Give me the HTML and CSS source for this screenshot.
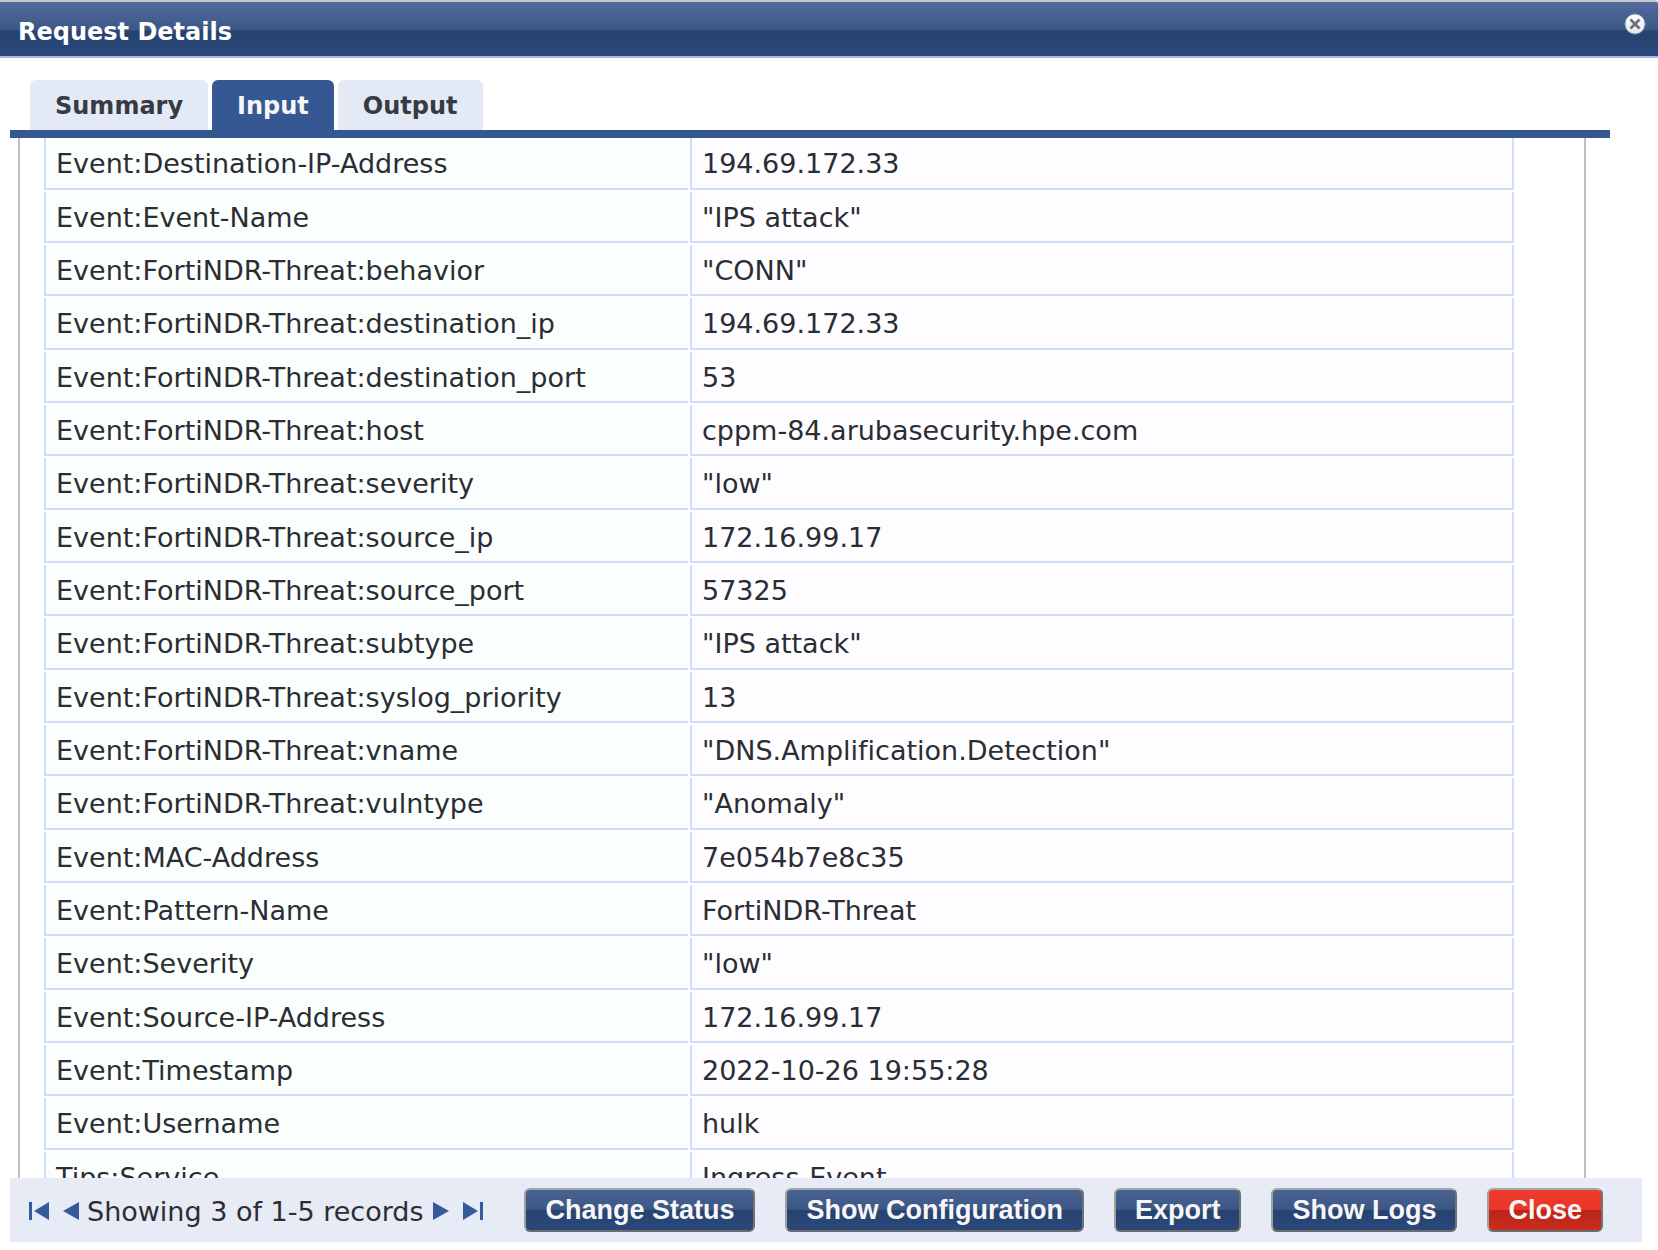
FILE: index.html
```html
<!DOCTYPE html>
<html lang="en">
<head>
<meta charset="utf-8">
<title>Request Details</title>
<link rel="stylesheet" href="styles.css">
</head>
<body>
<header class="titlebar">
  <h1 class="title">Request Details</h1>
  <button class="dismiss" type="button" aria-label="Close dialog">
    <svg width="22" height="22" viewBox="0 0 22 22">
      <defs><linearGradient id="knob" x1="0" y1="0" x2="0" y2="1"><stop offset="0" stop-color="#fff"/><stop offset="1" stop-color="#dfe7f3"/></linearGradient></defs>
      <circle cx="11" cy="11" r="10.2" fill="url(#knob)" stroke="#6f7a90" stroke-width="1"/>
      <path d="M6.5 6.5L15.5 15.5M15.5 6.5L6.5 15.5" stroke="#6c6f75" stroke-width="2.6"/>
    </svg>
  </button>
</header>
<nav class="tabs">
  <button class="tab" type="button">Summary</button>
  <button class="tab active" type="button">Input</button>
  <button class="tab" type="button">Output</button>
</nav>
<main class="viewport">
  <div class="panel">
    <table class="attributes">
      <tbody>
        <tr><th scope="row">Event:Destination-IP-Address</th><td>194.69.172.33</td></tr>
        <tr><th scope="row">Event:Event-Name</th><td>"IPS attack"</td></tr>
        <tr><th scope="row">Event:FortiNDR-Threat:behavior</th><td>"CONN"</td></tr>
        <tr><th scope="row">Event:FortiNDR-Threat:destination_ip</th><td>194.69.172.33</td></tr>
        <tr><th scope="row">Event:FortiNDR-Threat:destination_port</th><td>53</td></tr>
        <tr><th scope="row">Event:FortiNDR-Threat:host</th><td>cppm-84.arubasecurity.hpe.com</td></tr>
        <tr><th scope="row">Event:FortiNDR-Threat:severity</th><td>"low"</td></tr>
        <tr><th scope="row">Event:FortiNDR-Threat:source_ip</th><td>172.16.99.17</td></tr>
        <tr><th scope="row">Event:FortiNDR-Threat:source_port</th><td>57325</td></tr>
        <tr><th scope="row">Event:FortiNDR-Threat:subtype</th><td>"IPS attack"</td></tr>
        <tr><th scope="row">Event:FortiNDR-Threat:syslog_priority</th><td>13</td></tr>
        <tr><th scope="row">Event:FortiNDR-Threat:vname</th><td>"DNS.Amplification.Detection"</td></tr>
        <tr><th scope="row">Event:FortiNDR-Threat:vulntype</th><td>"Anomaly"</td></tr>
        <tr><th scope="row">Event:MAC-Address</th><td>7e054b7e8c35</td></tr>
        <tr><th scope="row">Event:Pattern-Name</th><td>FortiNDR-Threat</td></tr>
        <tr><th scope="row">Event:Severity</th><td>"low"</td></tr>
        <tr><th scope="row">Event:Source-IP-Address</th><td>172.16.99.17</td></tr>
        <tr><th scope="row">Event:Timestamp</th><td>2022-10-26 19:55:28</td></tr>
        <tr><th scope="row">Event:Username</th><td>hulk</td></tr>
        <tr><th scope="row">Tips:Service</th><td>Ingress-Event</td></tr>
      </tbody>
    </table>
  </div>
</main>
<footer class="footer">
  <div class="pager">
    <button class="page" type="button" aria-label="First record"><svg width="20" height="18" viewBox="0 0 20 18"><path d="M0 0H3V18H0ZM20 0V18L5 9Z"/></svg></button>
    <button class="page prev" type="button" aria-label="Previous record"><svg width="16" height="18" viewBox="0 0 16 18"><path d="M16 0V18L0 9Z"/></svg></button>
    <span class="count">Showing 3 of 1-5 records</span>
    <button class="page next" type="button" aria-label="Next record"><svg width="16" height="18" viewBox="0 0 16 18"><path d="M0 0V18L16 9Z"/></svg></button>
    <button class="page" type="button" aria-label="Last record"><svg width="20" height="18" viewBox="0 0 20 18"><path d="M17 0H20V18H17ZM0 0V18L15 9Z"/></svg></button>
  </div>
  <div class="actions">
    <button class="action" type="button">Change Status</button>
    <button class="action" type="button">Show Configuration</button>
    <button class="action" type="button">Export</button>
    <button class="action" type="button">Show Logs</button>
    <button class="action danger" type="button">Close</button>
  </div>
</footer>
</body>
</html>
```
FILE: styles.css
```css
* { box-sizing: border-box; }

body {
  margin: 0;
  height: 100vh;
  padding-bottom: 8px;
  display: flex;
  flex-direction: column;
  overflow: hidden;
  background: #fff;
  color: #2b2d33;
  font-family: Verdana, "DejaVu Sans", sans-serif;
  font-size: 27px;
  font-variant-ligatures: none;
}

button {
  margin: 0;
  padding: 0;
  border: 0;
  background: none;
  font: inherit;
  color: inherit;
}

svg { display: block; }

.titlebar {
  flex: none;
  display: flex;
  justify-content: space-between;
  align-items: flex-start;
  height: 58px;
  padding: 0 12px 0 18px;
  border-top: 2px solid #c8c8cc;
  border-bottom: 2px solid #b0b6d8;
  border-top-right-radius: 3px;
  background: linear-gradient(#526b9d 0, #3c5684 28px, #26426f 29px, #2a487b 100%);
}

.title {
  margin: 0;
  padding-top: 14px;
  font-size: 24px;
  line-height: 32px;
  color: #fff;
}

.dismiss { margin-top: 11px; }

.tabs {
  flex: none;
  display: flex;
  gap: 4px;
  margin: 22px 48px 0 10px;
  padding-left: 20px;
  border-bottom: 8px solid #355892;
}

.tab {
  height: 50px;
  padding: 2px 25px 0;
  border-radius: 6px 6px 0 0;
  background: #e4eaf5;
  color: #373a43;
  font-size: 24px;
  font-weight: bold;
}

.tab.active {
  background: #355892;
  color: #f6f6f6;
}

.viewport {
  flex: 1;
  min-height: 0;
  overflow: hidden;
  padding: 0 72px 0 18px;
}

.panel {
  padding: 0 68px 0 22px;
  border: solid #bfbfbf;
  border-width: 0 2px;
}

.attributes {
  width: 100%;
  margin-top: -2px;
  table-layout: fixed;
  border-collapse: separate;
  border-spacing: 2px;
}

.attributes th,
.attributes td {
  height: 51px;
  padding: 2px 10px 0;
  border: solid #d0dcfb;
  border-width: 0 0 2px 2px;
  text-align: left;
  font-weight: normal;
  line-height: 32px;
  white-space: nowrap;
}

.attributes tr:nth-child(3n+1) > * { height: 52px; }

.attributes th {
  width: 644px;
  background: #fafffe;
}

.attributes td {
  border-right-width: 2px;
  background: #fdfdff;
}

.footer {
  flex: none;
  display: flex;
  justify-content: space-between;
  align-items: center;
  height: 64px;
  margin: 0 16px 0 10px;
  padding: 0 39px 0 19px;
  background: #e7ebf5;
}

.pager,
.actions {
  display: flex;
  align-items: center;
  white-space: nowrap;
}

.pager { padding-top: 2px; }

.page { fill: #345a98; }

.prev { margin: 0 8px 0 14px; }

.next { margin: 0 14px 0 9px; }

.actions { gap: 30px; }

.action {
  height: 44px;
  padding: 1px 19px 0;
  border: 2px solid;
  border-color: #a6a6a6 #727272 #6c6c6c #a0a0a0;
  border-radius: 6px;
  background: linear-gradient(#486393 0, #3c5684 49%, #26426f 51%, #2a487b 100%);
  color: #f6f6f6;
  font-family: Arial, "Liberation Sans", sans-serif;
  font-size: 27px;
  font-weight: bold;
}

.danger {
  background: linear-gradient(#ec3b2d 0, #ec3528 49%, #b82619 51%, #cb2c1e 100%);
}
```
